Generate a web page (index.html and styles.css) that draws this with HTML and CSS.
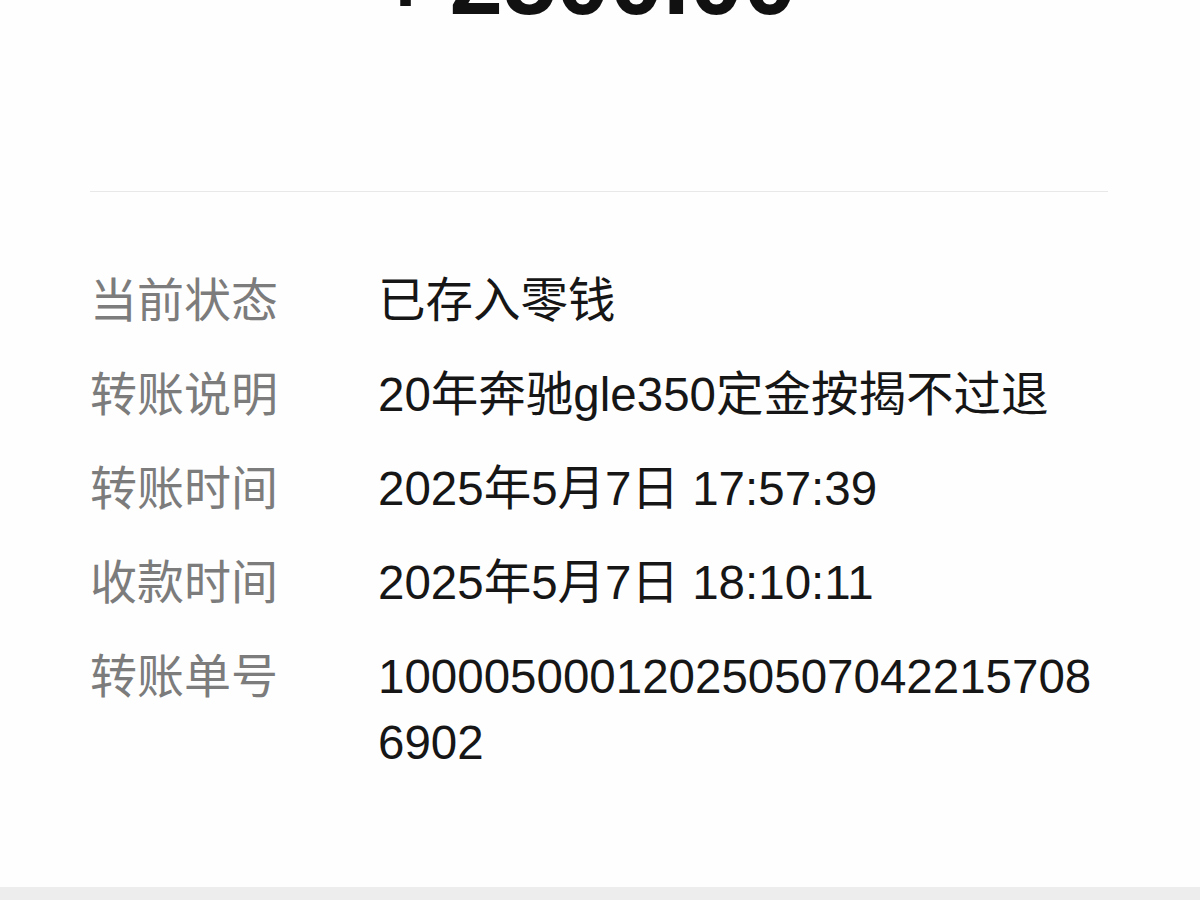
FILE: index.html
```html
<!DOCTYPE html>
<html lang="zh-CN">
<head>
<meta charset="utf-8">
<title>转账详情</title>
<link rel="stylesheet" href="styles.css">
</head>
<body>
<div class="page">
  <main class="sheet">
    <div class="amount"><span class="sign">+</span>2500.00</div>
    <hr class="divider">
    <dl class="details">
      <div class="row"><dt>当前状态</dt><dd>已存入零钱</dd></div>
      <div class="row"><dt>转账说明</dt><dd>20年奔驰gle350定金按揭不过退</dd></div>
      <div class="row"><dt>转账时间</dt><dd>2025年5月7日 17:57:39</dd></div>
      <div class="row"><dt>收款时间</dt><dd>2025年5月7日 18:10:11</dd></div>
      <div class="row"><dt>转账单号</dt><dd class="num">1000050001202505070422157086902</dd></div>
    </dl>
  </main>
  <div class="bottom-bar"></div>
</div>
</body>
</html>
```
FILE: styles.css
```css
html, body {
  margin: 0;
  padding: 0;
  background: #fefefe;
}
body {
  font-family: "Liberation Sans", "Noto Sans CJK SC", sans-serif;
}
.page {
  width: 1200px;
  height: 900px;
  overflow: hidden;
  display: flex;
  flex-direction: column;
}
.sheet {
  height: 887px;
  overflow: hidden;
  background: #fefefe;
  padding: 0 92px 0 90px;
  box-sizing: border-box;
}
.amount {
  margin-top: -74px;
  height: 110px;
  line-height: 110px;
  font-size: 96px;
  font-weight: 700;
  color: #111;
  text-align: center;
  padding-right: 24px;
  letter-spacing: 0;
}
.sign {
  margin-right: 16px;
}
.divider {
  border: 0;
  height: 1px;
  background: #e8e8e8;
  margin: 155px 0 0 0;
}
.details {
  margin: 0;
  padding-top: 76px;
  display: flex;
  flex-direction: column;
  gap: 28px;
}
.row {
  display: grid;
  grid-template-columns: 288px 1fr;
  line-height: 66px;
}
.row dt {
  margin: 0;
  font-size: 47px;
  color: #7c7c7c;
}
.row dd {
  margin: 0;
  font-size: 47.5px;
  color: #161616;
}
.num {
  word-break: break-all;
}
.bottom-bar {
  flex: 1;
  background: #ededed;
}
```
